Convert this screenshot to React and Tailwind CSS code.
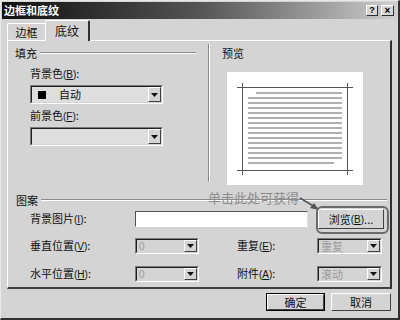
import React from 'react'

const font = "font-['Noto_Sans_CJK_SC','Liberation_Sans',sans-serif]"

function Key({ k }) {
  return (
    <span className="font-['Liberation_Sans',sans-serif] text-[10px]">
      (<span className="underline">{k}</span>)
    </span>
  )
}

function Label({ text, k, className = '' }) {
  return (
    <div className={`${font} text-[11px] leading-[12px] text-[#111] ${className}`}>
      {text}
      <Key k={k} />:
    </div>
  )
}

function ArrowBtn() {
  return (
    <div className="w-[13px] h-full flex items-center justify-center bg-[#d4d4d4] border border-t-white border-l-white border-r-[#404040] border-b-[#404040]">
      <svg width="7" height="4" viewBox="0 0 7 4">
        <path d="M0 0h7L3.5 4z" fill="#111" />
      </svg>
    </div>
  )
}

function Combo({ className = '', children, bg = 'bg-[#dedede]' }) {
  return (
    <div className={`flex border border-t-[#7a7a7a] border-l-[#7a7a7a] border-b-white border-r-white ${className}`}>
      <div className={`flex-1 flex items-center border border-t-[#202020] border-l-[#202020] border-b-[#d4d4d4] border-r-[#d4d4d4] ${bg}`}>
        <div className="flex-1 flex items-center min-w-0">{children}</div>
        <ArrowBtn />
      </div>
    </div>
  )
}

function GroupLine({ className = '' }) {
  return (
    <div className={`flex-1 h-[2px] border-t border-t-[#8a8a8a] border-b border-b-white ${className}`} />
  )
}

function PreviewPage() {
  const lines = Array.from({ length: 15 })
  return (
    <div className="w-[136px] h-[113px] bg-white flex items-center justify-center">
      <div className="relative w-[106px] h-[84px] border border-[#555] flex flex-col gap-[3px] pt-[4px] px-[5px]">
        {lines.map((_, i) => (
          <div
            key={i}
            className={`h-[2px] bg-[#b0b0b0] ${i === 0 ? 'ml-[8px]' : ''} ${i === 14 ? 'mr-[8px]' : ''}`}
          />
        ))}
        <span className="absolute -left-[6px] -top-[5px] w-[6px] h-[5px] border-r border-b border-[#555]" />
        <span className="absolute -right-[6px] -top-[5px] w-[6px] h-[5px] border-l border-b border-[#555]" />
        <span className="absolute -left-[6px] -bottom-[5px] w-[6px] h-[5px] border-r border-t border-[#555]" />
        <span className="absolute -right-[6px] -bottom-[5px] w-[6px] h-[5px] border-l border-t border-[#555]" />
      </div>
    </div>
  )
}

function DlgButton({ children, def, className = '' }) {
  return (
    <div className={`${def ? 'border border-black' : ''} ${className}`}>
      <div className={`h-full flex items-center justify-center bg-[#d4d4d4] border border-t-white border-l-white border-r-[#404040] border-b-[#404040] ${font} text-[11px] text-[#111]`}>
        {children}
      </div>
    </div>
  )
}

export default function App() {
  return (
    <div className="relative w-[400px] h-[320px] bg-[#d4d4d4] flex flex-col border-r-2 border-b-2 border-r-[#303030] border-b-[#303030] border-l border-t border-l-[#e8e8e8] border-t-[#e8e8e8] overflow-hidden">
      {/* title bar */}
      <div className="h-[17px] mx-[1px] mt-[1px] flex items-center justify-between px-[2px] bg-gradient-to-r from-[#111] via-[#555] to-[#cfcfcf]">
        <div className={`${font} text-[11px] font-bold text-white leading-none`}>边框和底纹</div>
        <div className="flex gap-[3px] mr-[1px]">
          <div className="w-[12px] h-[11px] bg-[#d8d8d8] border border-t-white border-l-white border-r-[#303030] border-b-[#303030] flex items-center justify-center font-['Liberation_Sans',sans-serif] font-bold text-[9px] leading-none text-black">?</div>
          <div className="w-[13px] h-[11px] bg-[#d8d8d8] border border-t-white border-l-white border-r-[#303030] border-b-[#303030] flex items-center justify-center font-['Liberation_Sans',sans-serif] font-bold text-[10px] leading-none text-black">×</div>
        </div>
      </div>

      {/* tabs */}
      <div className="h-[21px] flex items-end pl-[6px]">
        <div className={`w-[38px] h-[17px] flex items-center justify-center border-t border-l border-t-white border-l-white rounded-tl-[2px] ${font} text-[11px] text-[#111]`}>
          边框
        </div>
        <div className={`relative z-10 -mb-[1px] w-[45px] h-[21px] flex items-center justify-center bg-[#d4d4d4] border-t border-l border-r-2 border-t-white border-l-white border-r-[#303030] rounded-t-[2px] ${font} text-[12px] text-[#111]`}>
          底纹
        </div>
      </div>

      {/* panel */}
      <div className="mx-[6px] h-[249px] border border-t-white border-l-white border-r-2 border-b-2 border-r-[#303030] border-b-[#404040] flex flex-col">
        <div className="h-[150px] flex">
          {/* fill */}
          <div className="w-[200px] pt-[6px]">
            <div className="flex items-center pl-[7px] pr-[12px] gap-[3px]">
              <div className={`${font} text-[11px] leading-[12px] text-[#111]`}>填充</div>
              <GroupLine />
            </div>
            <div className="pl-[22px] pt-[8px] flex flex-col">
              <Label text="背景色" k="B" />
              <Combo className="mt-[4px] w-[133px] h-[19px]">
                <span className="ml-[6px] w-[8px] h-[8px] bg-black" />
                <span className={`ml-[13px] ${font} text-[11px] text-[#111]`}>自动</span>
              </Combo>
              <Label text="前景色" k="F" className="mt-[5px]" />
              <Combo className="mt-[4px] w-[133px] h-[19px]" />
            </div>
          </div>
          {/* preview */}
          <div className="flex-1 flex">
            <div className="mt-[3px] h-[138px] w-[2px] border-l border-l-[#8a8a8a] border-r border-r-white" />
            <div className="pl-[12px] pt-[6px]">
              <div className={`${font} text-[11px] leading-[12px] text-[#111]`}>预览</div>
              <div className="ml-[5px] mt-[13px]">
                <PreviewPage />
              </div>
            </div>
          </div>
        </div>

        {/* pattern */}
        <div className="flex items-center pl-[8px] pr-[3px] gap-[3px] mt-[3px]">
          <div className={`${font} text-[11px] leading-[12px] text-[#111]`}>图案</div>
          <GroupLine />
        </div>

        <div className="flex items-center mt-[3px] h-[20px]">
          <Label text="背景图片" k="I" className="ml-[22px] w-[105px]" />
          <div className="w-[173px] h-[16px] bg-white border border-t-[#505050] border-l-[#505050] border-b-white border-r-[#e0e0e0]" />
          <DlgButton className="ml-[10px] w-[66px] h-[20px]">
            浏览<Key k="B" />...
          </DlgButton>
        </div>

        <div className="flex items-center mt-[9px] h-[16px]">
          <Label text="垂直位置" k="V" className="ml-[22px] w-[105px]" />
          <Combo className="w-[64px] h-[16px]" bg="bg-[#d4d4d4]">
            <span className="ml-[2px] font-['Liberation_Sans',sans-serif] text-[10px] text-[#9a9a9a]">0</span>
          </Combo>
          <Label text="重复" k="E" className="ml-[38px] w-[80px]" />
          <Combo className="w-[65px] h-[16px]" bg="bg-[#d4d4d4]">
            <span className={`ml-[2px] ${font} text-[11px] text-[#9a9a9a]`}>重复</span>
          </Combo>
        </div>

        <div className="flex items-center mt-[12px] h-[16px]">
          <Label text="水平位置" k="H" className="ml-[22px] w-[105px]" />
          <Combo className="w-[64px] h-[16px]" bg="bg-[#d4d4d4]">
            <span className="ml-[2px] font-['Liberation_Sans',sans-serif] text-[10px] text-[#9a9a9a]">0</span>
          </Combo>
          <Label text="附件" k="A" className="ml-[38px] w-[80px]" />
          <Combo className="w-[65px] h-[16px]" bg="bg-[#d4d4d4]">
            <span className={`ml-[2px] ${font} text-[11px] text-[#9a9a9a]`}>滚动</span>
          </Combo>
        </div>
      </div>

      {/* buttons */}
      <div className="flex justify-end gap-[6px] pr-[7px] mt-[4px]">
        <DlgButton def className="w-[59px] h-[18px]">确定</DlgButton>
        <DlgButton className="w-[60px] h-[18px]">取消</DlgButton>
      </div>

      {/* annotation overlay */}
      <div className={`absolute left-[207px] top-[189px] ${font} text-[13px] leading-[15px] text-[#8c8c8c]`}>
        单击此处可获得
      </div>
      <svg className="absolute left-[298px] top-[193px]" width="24" height="20" viewBox="0 0 24 20">
        <path d="M1 4 L16 13" stroke="#555" strokeWidth="1.5" fill="none" />
        <path d="M20 16 L11 14 L15 9 Z" fill="#555" />
      </svg>
      <div className="absolute left-[315px] top-[205px] w-[73px] h-[28px] rounded-[6px] border-2 border-[#6a6a6a]" />
    </div>
  )
}
